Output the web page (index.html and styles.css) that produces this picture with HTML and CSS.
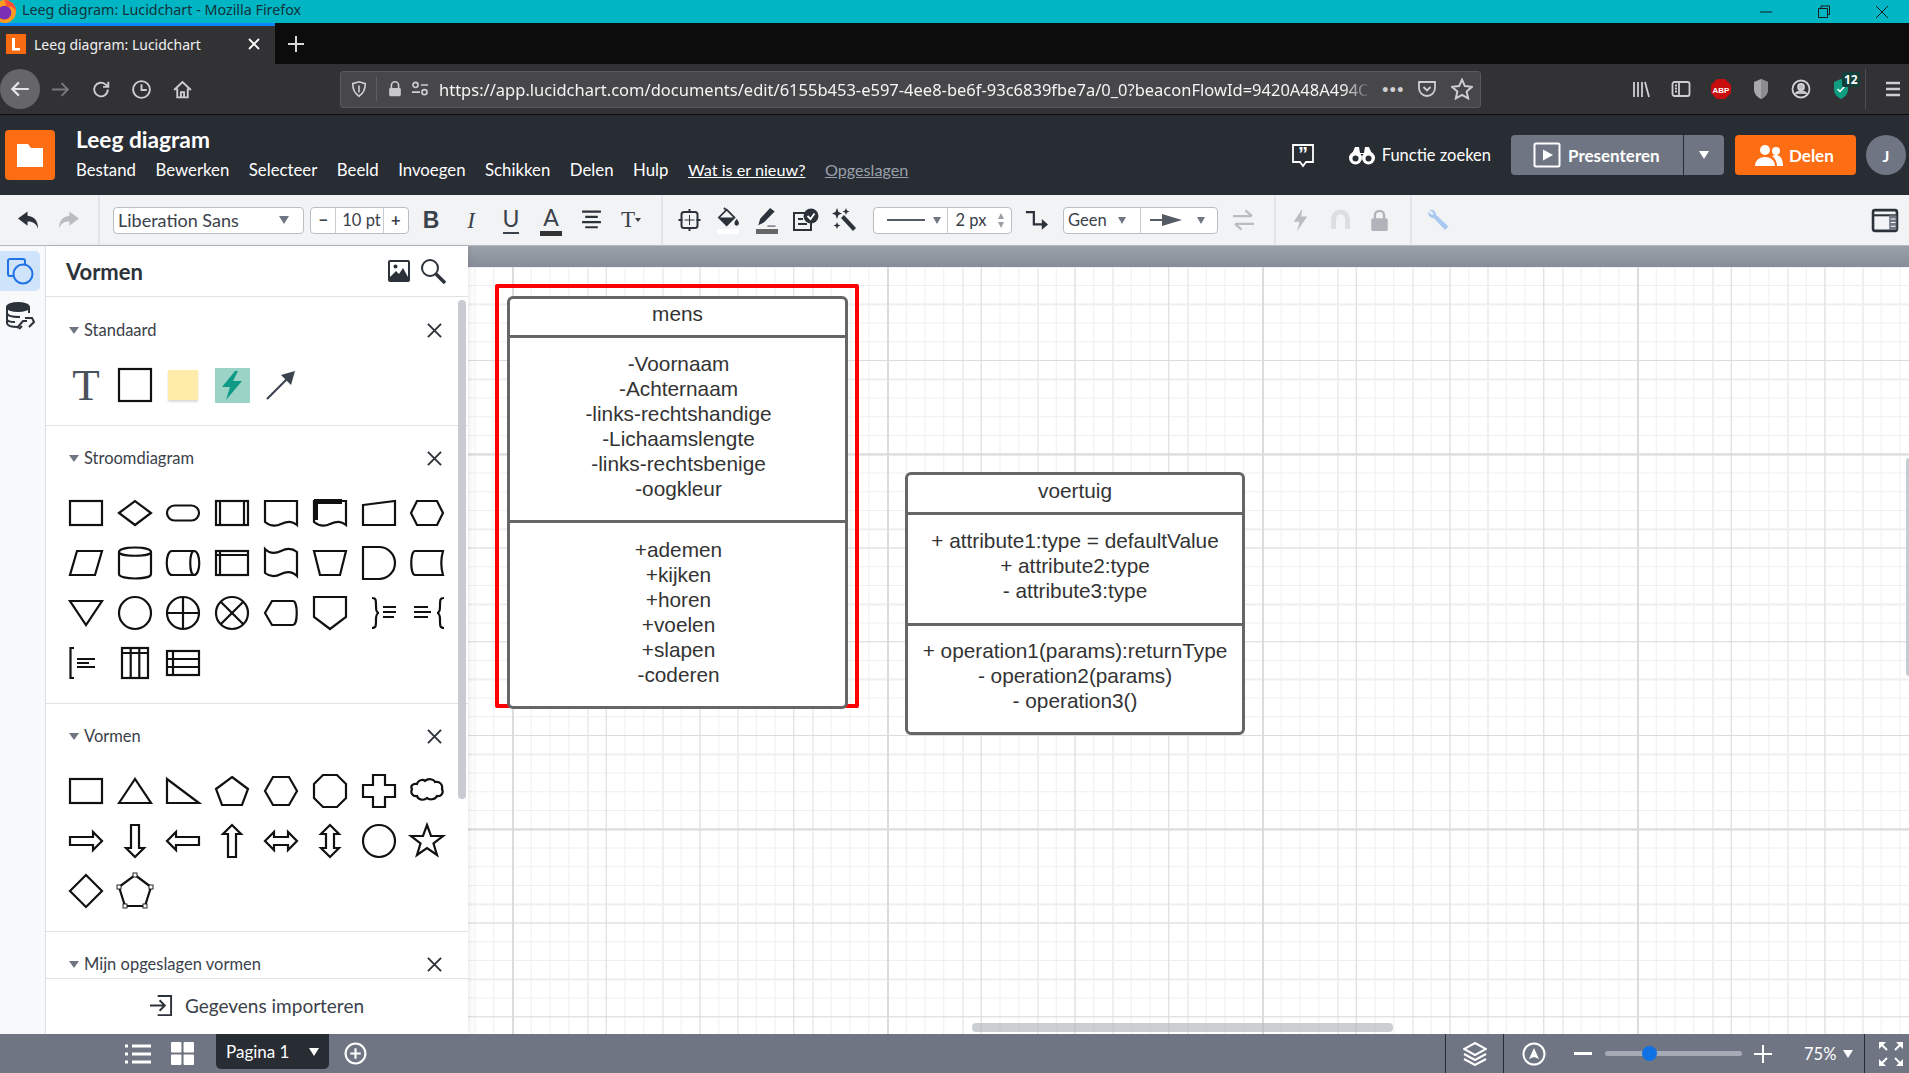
FILE: index.html
```html
<!DOCTYPE html>
<html lang="en">
<head>
  <meta charset="UTF-8">
  <title>Leeg diagram: Lucidchart</title>
  <link rel="stylesheet" href="styles.css">
</head>
<body>
  <div class="titlebar">
    <svg class="ff-logo" viewBox="0 0 20 20"><circle cx="10" cy="10" r="10" fill="#ff9a1f"/><circle cx="10" cy="11" r="6" fill="#7a2fb5"/><path d="M10 0a10 10 0 0 1 10 10c-2-4-5-5-8-4z" fill="#ff4f3a"/></svg>
    <span class="title-text">Leeg diagram: Lucidchart - Mozilla Firefox</span>
    <div class="win-controls">
      <svg viewBox="0 0 14 14"><path d="M1 7H13"/></svg>
      <svg viewBox="0 0 14 14"><path d="M1.5 3.5H10.5V12.5H1.5ZM4 3.5V1H12.5V9.5H10.5"/></svg>
      <svg viewBox="0 0 14 14"><path d="M1 1 13 13M13 1 1 13"/></svg>
    </div>
  </div>

  <div class="tabbar">
    <div class="tab">
      <svg class="favicon" viewBox="0 0 20 20"><rect width="20" height="20" fill="#f96b13"/><path d="M6 4H9V14H14V16.5H6Z" fill="#fff"/></svg>
      <span class="tab-title">Leeg diagram: Lucidchart</span>
      <svg class="tab-close" viewBox="0 0 12 12"><path d="M1 1 11 11M11 1 1 11"/></svg>
    </div>
    <svg class="tab-new" viewBox="0 0 18 18"><path d="M9 1V17M1 9H17"/></svg>
  </div>

  <div class="navbar">
    <div class="nav-back"><svg viewBox="0 0 20 20"><path d="M18 10H3M9 4 3 10l6 6"/></svg></div>
    <button class="nav-btn dim"><svg viewBox="0 0 20 20"><path d="M2 10H17M11 4l6 6-6 6"/></svg></button>
    <button class="nav-btn"><svg viewBox="0 0 20 20"><path d="M16 10a6.5 6.5 0 1 1-2-4.7L16 7M16.5 2.5V7.5H11.5"/></svg></button>
    <button class="nav-btn"><svg viewBox="0 0 20 20"><circle cx="10" cy="10" r="8"/><path d="M10 5V10.5H15"/></svg></button>
    <button class="nav-btn"><svg viewBox="0 0 20 20"><path d="M2 10.5 10 3l8 7.5M5 9V17.5H15V9M8.5 17.5V12.5H11.5V17.5"/></svg></button>
    <div class="urlbar">
      <svg class="url-icon shield" viewBox="0 0 20 20"><path d="M3 4 10 2l7 2c0 7-2 11-7 14C5 15 3 11 3 4ZM10 6V14"/></svg>
      <span class="url-sep"></span>
      <svg class="url-icon lock" viewBox="0 0 20 20"><path d="M6 9V6a4 4 0 0 1 8 0V9" fill="none"/><rect x="3.5" y="9" width="13" height="9" rx="1.5" class="solid"/></svg>
      <svg class="url-icon perm" viewBox="0 0 20 20"><circle cx="5" cy="5.5" r="2.8"/><path d="M11 5.5H19M1 13.5H10"/><circle cx="15" cy="13.5" r="2.8"/></svg>
      <span class="url-text">https://app.lucidchart.com/documents/edit/6155b453-e597-4ee8-be6f-93c6839fbe7a/0_0?beaconFlowId=9420A48A494CD</span>
      <span class="url-more">•••</span>
      <svg class="url-icon pocket" viewBox="0 0 20 20"><path d="M2 3H18V9a8 8 0 0 1-16 0ZM6.5 8 10 11.5 13.5 8"/></svg>
      <svg class="url-icon star" viewBox="0 0 20 20"><path d="M10 1.5 12.6 7.3 19 8 14.2 12.3 15.6 18.5 10 15.3 4.4 18.5 5.8 12.3 1 8 7.4 7.3Z"/></svg>
    </div>
    <div class="nav-right">
      <svg class="ext" viewBox="0 0 20 20"><path d="M3 3V18M7 3V18M11 3V18M14 3 18 18"/></svg>
      <svg class="ext" viewBox="0 0 20 20"><rect x="1.5" y="3" width="17" height="14" rx="2"/><path d="M8 3V17M4 6.5H6M4 9.5H6M4 12.5H6"/></svg>
      <svg class="ext" viewBox="0 0 20 20"><path d="M6 0H14L20 6V14L14 20H6L0 14V6Z" fill="#c70d0d" stroke="none"/><text x="10" y="13.5" class="abp">ABP</text></svg>
      <svg class="ext" viewBox="0 0 20 20"><path d="M10 0 17 3V10C17 15 14 18 10 20 6 18 3 15 3 10V3Z" fill="#a8a8aa" stroke="none"/><path d="M10 0V20C14 18 17 15 17 10V3Z" fill="#8c8c8e" stroke="none"/></svg>
      <svg class="ext" viewBox="0 0 20 20"><circle cx="10" cy="10" r="8.5"/><circle cx="10" cy="8" r="3" fill="#b9b9bb"/><path d="M4.5 15C6 11.5 14 11.5 15.5 15" fill="#b9b9bb"/></svg>
      <div class="ext-badge">
        <svg class="ext" viewBox="0 0 20 20"><path d="M10 0 17 3V10C17 15 14 18 10 20 6 18 3 15 3 10V3Z" fill="#0f9d82" stroke="none"/><path d="M6.5 10 9 12.5 13.5 7.5" stroke="#fff" stroke-width="1.5"/></svg>
        <span class="badge">12</span>
      </div>
      <span class="nav-sep"></span>
      <svg class="ext menu" viewBox="0 0 20 20"><path d="M3 4H17M3 10H17M3 16H17"/></svg>
    </div>
  </div>

  <header class="appbar">
    <div class="logo"><svg viewBox="0 0 26 24"><path d="M0 1H11L14 5H26V24H0Z" fill="#fff"/></svg></div>
    <div class="doc">
      <div class="doc-title">Leeg diagram</div>
      <nav class="menu-row">
        <span>Bestand</span><span>Bewerken</span><span>Selecteer</span><span>Beeld</span><span>Invoegen</span><span>Schikken</span><span>Delen</span><span>Hulp</span>
        <a class="news">Wat is er nieuw?</a><a class="saved">Opgeslagen</a>
      </nav>
    </div>
    <div class="app-actions">
      <svg class="feedback" viewBox="0 0 26 26"><path d="M3 3H23V20H16L13 24 10 20H3Z"/><text x="13" y="19" class="quote">”</text></svg>
      <div class="find">
        <svg viewBox="0 0 26 20"><circle cx="6.5" cy="13" r="6.5" fill="#fff"/><circle cx="19.5" cy="13" r="6.5" fill="#fff"/><path d="M3 9 6 2H10L11 8H15L16 2H20L23 9Z" fill="#fff"/><circle cx="6.5" cy="13.5" r="3" fill="#282c33"/><circle cx="19.5" cy="13.5" r="3" fill="#282c33"/></svg>
        <span>Functie zoeken</span>
      </div>
      <div class="present">
        <div class="present-main">
          <svg viewBox="0 0 28 26"><rect x="1.5" y="1.5" width="25" height="23" rx="1.5"/><path d="M10 7.5 20 13 10 18.5Z" fill="#fff" stroke="none"/></svg>
          <span>Presenteren</span>
        </div>
        <div class="present-more"><i class="caret white"></i></div>
      </div>
      <div class="share">
        <svg viewBox="0 0 28 22"><circle cx="10" cy="6" r="5" fill="#fff"/><circle cx="21" cy="7" r="4" fill="#fff"/><path d="M0 22C0 10 20 10 20 22Z" fill="#fff"/><path d="M17 12C22 9 28 12 28 22H22C22 18 20 14 17 12Z" fill="#fff"/></svg>
        <span>Delen</span>
      </div>
      <div class="avatar">J</div>
    </div>
  </header>

  <div class="toolbar">
    <div class="tb-group tb-undo">
      <button class="tb-btn"><svg viewBox="0 0 24 20"><path d="M11 1 1 8.5 11 16V11.5C16 11.5 20 13 22 19 22 11 18 6 11 5.5Z" fill="#2c323a"/></svg></button>
      <button class="tb-btn"><svg viewBox="0 0 24 20"><path d="M13 1 23 8.5 13 16V11.5C8 11.5 4 13 2 19 2 11 6 6 13 5.5Z" fill="#b9bcc1"/></svg></button>
    </div>
    <span class="tb-sep sep-a"></span>
    <div class="field font-field"><span>Liberation Sans</span><i class="caret"></i></div>
    <div class="field size-field">
      <span class="step">−</span><span class="size-val">10 pt</span><span class="step">+</span>
    </div>
    <div class="tb-group tb-text">
      <button class="tb-btn glyph bold">B</button>
      <button class="tb-btn glyph italic">I</button>
      <button class="tb-btn glyph under">U</button>
      <button class="tb-btn glyph color">A</button>
      <button class="tb-btn"><svg viewBox="0 0 22 20"><path d="M2 2H20M5 7H17M2 12H20M5 17H17" class="stroke"/></svg></button>
      <button class="tb-btn"><span class="glyph-t">T</span><i class="caret tiny"></i></button>
    </div>
    <span class="tb-sep sep-b"></span>
    <div class="tb-group tb-style">
      <button class="tb-btn"><svg viewBox="0 0 22 22"><rect x="3" y="3" width="16" height="16" rx="2.5" class="stroke"/><path d="M11 0V4M11 18V22M0 11H4M18 11H22" class="stroke"/><path d="M11 6V16M6 11H16" class="thin"/></svg></button>
      <button class="tb-btn stack"><svg viewBox="0 0 24 22"><path d="M10 3 18.5 11.5 10 20 1.5 11.5Z" fill="none" stroke="#2c323a" stroke-width="2"/><path d="M1.5 11.5H18.5L10 20Z" fill="#2c323a"/><path d="M7 1 10 4" stroke="#2c323a" stroke-width="2"/><path d="M21 13c1.5 2.5 2.5 3.5 2.5 5a2.5 2.5 0 0 1-5 0c0-1.5 1-2.5 2.5-5Z" fill="#2c323a"/></svg><i class="swatch white-swatch"></i></button>
      <button class="tb-btn stack"><svg viewBox="0 0 22 22"><path d="M15 1 20 5 8 17 2 20 4 13Z" fill="#2c323a"/><path d="M12 21H21" class="thin"/></svg><i class="swatch gray-swatch"></i></button>
      <button class="tb-btn wide"><svg viewBox="0 0 28 24"><path d="M14 5H3V22H20V15" class="stroke"/><path d="M7 11H12M7 16H16" class="stroke"/><circle cx="20" cy="8" r="7.5" fill="#2c323a"/><path d="M16.5 8 19.5 11 23.5 5.5" stroke="#fff" stroke-width="1.8" fill="none"/></svg></button>
      <button class="tb-btn wide"><svg viewBox="0 0 26 26"><path d="M10 11 13 8 25 21 22 24Z" fill="#2c323a"/><path d="M6 1 7.5 5 11 6.5 7.5 8 6 12 4.5 8 1 6.5 4.5 5ZM15 1 16 3.5 18.5 4.5 16 5.5 15 8 14 5.5 11.5 4.5 14 3.5ZM6 15 7 17.5 9.5 18.5 7 19.5 6 22 5 19.5 2.5 18.5 5 17.5Z" fill="#2c323a"/></svg></button>
    </div>
    <div class="field line-field">
      <div class="line-pick"><span class="line-sample"></span><i class="caret"></i></div>
      <div class="line-width"><span>2 px</span><span class="spin"><i class="caret up"></i><i class="caret"></i></span></div>
    </div>
    <button class="tb-btn tb-conn"><svg viewBox="0 0 26 24"><path d="M1 3H10V17H20" fill="none" stroke="#2c323a" stroke-width="2.5"/><path d="M19 11 26 17 19 23Z" fill="#2c323a"/></svg></button>
    <div class="field end-field">
      <div class="end-none"><span>Geen</span><i class="caret"></i></div>
      <div class="end-arrow"><svg viewBox="0 0 32 12"><path d="M0 6H14" stroke="#555b64" stroke-width="2"/><path d="M12 0 32 6 12 12Z" fill="#555b64"/></svg><i class="caret"></i></div>
    </div>
    <button class="tb-btn tb-swap"><svg viewBox="0 0 24 22"><path d="M1 7H20M14 1 21 7M23 15H4M10 21 3 15" stroke="#b9bcc1" stroke-width="2.2" fill="none"/></svg></button>
    <span class="tb-sep sep-c"></span>
    <div class="tb-group tb-off">
      <button class="tb-btn"><svg viewBox="0 0 18 26"><path d="M11 0 1 15H8L5 26 17 9H10Z" fill="#b9bcc1"/></svg></button>
      <button class="tb-btn"><svg viewBox="0 0 20 22"><path d="M3 20V10a7 7 0 0 1 14 0V20" fill="none" stroke="#dcdee2" stroke-width="5"/></svg></button>
      <button class="tb-btn"><svg viewBox="0 0 20 24"><path d="M5 11V7a5 5 0 0 1 10 0V11" fill="none" stroke="#b0b3b9" stroke-width="2.5"/><rect x="1" y="10" width="18" height="14" rx="2" fill="#b0b3b9"/></svg></button>
    </div>
    <span class="tb-sep sep-d"></span>
    <button class="tb-btn tb-wrench"><svg viewBox="0 0 24 24"><path d="M2 1C6 0 9 2 9.5 6.5L23 19 19 23 7 10C3 10 0 7 1 3L5 6.5 7 5Z" fill="#a9c9f0"/></svg></button>
    <button class="tb-btn tb-panel"><svg viewBox="0 0 26 24"><rect x="1.5" y="2" width="23" height="20" rx="2" fill="none" stroke="#2c323a" stroke-width="2.5"/><path d="M2 7H24" stroke="#2c323a" stroke-width="2"/><path d="M17 7V21H24V7Z" fill="#6f7582"/><path d="M18.5 10.5H23M18.5 14H23M18.5 17.5H23" stroke="#fff"/></svg></button>
  </div>

  <div class="workspace">
    <aside class="rail">
      <div class="rail-item active"><svg viewBox="0 0 28 28"><rect x="2" y="2" width="17" height="17" rx="2"/><circle cx="17" cy="17" r="9.5" fill="#cfe3fb"/></svg></div>
      <div class="rail-item"><svg viewBox="0 0 30 28" class="db"><ellipse cx="13" cy="5" rx="11" ry="4" fill="#2c323a"/><path d="M2 5V21C2 24 8 25 13 25M2 11C2 14 8 15 15 15M2 17C2 19 6 20 10 20M24 5V11"/><path d="M17 24 14 27M20 16 27 16 29 20 24 25M12 26 18 19H22"/></svg></div>
    </aside>

    <section class="panel">
      <div class="panel-head">
        <span class="panel-title">Vormen</span>
        <svg class="panel-ico" viewBox="0 0 24 24"><rect x="1" y="1" width="22" height="22" rx="2" fill="#2c323a"/><rect x="3" y="3" width="18" height="15" fill="#fff"/><circle cx="8.5" cy="7.5" r="2" fill="#2c323a"/><path d="M3 18 9 12 12 15 16 9 21 18Z" fill="#2c323a"/></svg>
        <svg class="panel-ico search" viewBox="0 0 26 26"><circle cx="10" cy="10" r="8" fill="none" stroke="#2c323a" stroke-width="2"/><path d="M16 16 25 25" stroke="#2c323a" stroke-width="3.5"/></svg>
      </div>
      <div class="panel-scroll">
        <div class="scrollthumb"></div>

        <div class="lib">
          <div class="lib-head"><i class="caret"></i><span>Standaard</span><svg class="lib-x" viewBox="0 0 16 16"><path d="M1 1 15 15M15 1 1 15"/></svg></div>
          <div class="shapes">
            <div class="cell"><span class="shape-t">T</span></div>
            <div class="cell"><svg class="shape" viewBox="0 0 34 34"><rect x="1" y="1" width="32" height="32"/></svg></div>
            <div class="cell"><span class="sticky"></span></div>
            <div class="cell"><span class="bolt"><svg viewBox="0 0 24 30"><path d="M15 1 2 17H10L6 30 22 11H13L18 1Z" fill="#0d9b85"/></svg></span></div>
            <div class="cell"><svg class="shape" viewBox="0 0 34 34"><path d="M3 31 24 10" stroke="#3a444f" stroke-width="2.2"/><path d="M31 3 27 17 17 7Z" fill="#3a444f" stroke="none"/></svg></div>
          </div>
        </div>

        <div class="lib">
          <div class="lib-head"><i class="caret"></i><span>Stroomdiagram</span><svg class="lib-x" viewBox="0 0 16 16"><path d="M1 1 15 15M15 1 1 15"/></svg></div>
          <div class="shapes">
            <div class="cell"><svg class="shape" viewBox="0 0 34 34"><rect x="1" y="5" width="32" height="24"/></svg></div>
            <div class="cell"><svg class="shape" viewBox="0 0 34 34"><path d="M1 17 17 5 33 17 17 29Z"/></svg></div>
            <div class="cell"><svg class="shape" viewBox="0 0 34 34"><rect x="1" y="9.5" width="32" height="15" rx="7.5"/></svg></div>
            <div class="cell"><svg class="shape" viewBox="0 0 34 34"><rect x="1" y="5" width="32" height="24"/><path d="M5 5V29M29 5V29"/></svg></div>
            <div class="cell"><svg class="shape" viewBox="0 0 34 34"><path d="M1 5H33V29C28 25 24 25 17 28 11 31 6 30 1 26Z"/></svg></div>
            <div class="cell"><svg class="shape" viewBox="0 0 34 34"><path d="M1 5H33V29C28 25 24 25 17 28 11 31 6 30 1 26Z"/><path d="M1 3H29V8H5V24H1Z" fill="#111" stroke="none"/></svg></div>
            <div class="cell"><svg class="shape" viewBox="0 0 34 34"><path d="M1 9 33 5V29H1Z"/></svg></div>
            <div class="cell"><svg class="shape" viewBox="0 0 34 34"><path d="M7 5H27L33 17 27 29H7L1 17Z"/></svg></div>

            <div class="cell"><svg class="shape" viewBox="0 0 34 34"><path d="M8 5H33L26 29H1Z"/></svg></div>
            <div class="cell"><svg class="shape" viewBox="0 0 34 34"><path d="M1 6C1 0 33 0 33 6V28C33 34 1 34 1 28ZM1 6C1 11 33 11 33 6"/></svg></div>
            <div class="cell"><svg class="shape" viewBox="0 0 34 34"><path d="M6 5H28C35 5 35 29 28 29H6C-1 29-1 5 6 5ZM28 5C23 5 23 29 28 29"/></svg></div>
            <div class="cell"><svg class="shape" viewBox="0 0 34 34"><rect x="1" y="5" width="32" height="24"/><path d="M5 5V29M1 9H33"/></svg></div>
            <div class="cell"><svg class="shape" viewBox="0 0 34 34"><path d="M1 3C6 8 11 8 17 5 23 2 28 2 33 6V30C28 25 23 25 17 28 11 31 6 31 1 27Z"/></svg></div>
            <div class="cell"><svg class="shape" viewBox="0 0 34 34"><path d="M1 5H33L27 29H7Z"/></svg></div>
            <div class="cell"><svg class="shape" viewBox="0 0 34 34"><path d="M1 1H17A16 16 0 0 1 17 33H1Z"/></svg></div>
            <div class="cell"><svg class="shape" viewBox="0 0 34 34"><path d="M5 5H33C31 12 31 22 33 29H5C0 29 0 5 5 5Z"/></svg></div>

            <div class="cell"><svg class="shape" viewBox="0 0 34 34"><path d="M1 5H33L17 29Z"/></svg></div>
            <div class="cell"><svg class="shape" viewBox="0 0 34 34"><circle cx="17" cy="17" r="16"/></svg></div>
            <div class="cell"><svg class="shape" viewBox="0 0 34 34"><circle cx="17" cy="17" r="16"/><path d="M17 1V33M1 17H33"/></svg></div>
            <div class="cell"><svg class="shape" viewBox="0 0 34 34"><circle cx="17" cy="17" r="16"/><path d="M5.7 5.7 28.3 28.3M28.3 5.7 5.7 28.3"/></svg></div>
            <div class="cell"><svg class="shape" viewBox="0 0 34 34"><path d="M8 5H29C34 5 34 29 29 29H8L1 17Z"/></svg></div>
            <div class="cell"><svg class="shape" viewBox="0 0 34 34"><path d="M1 1H33V21L17 33 1 21Z"/></svg></div>
            <div class="cell"><svg class="shape" viewBox="0 0 34 34"><path d="M10 2C14 2 14 4 14 10 14 15 15 17 17 17 15 17 14 19 14 24 14 30 14 32 10 32M21 11H34M21 16H34M21 21H32"/></svg></div>
            <div class="cell"><svg class="shape" viewBox="0 0 34 34"><path d="M34 2C30 2 30 4 30 10 30 15 29 17 27 17 29 17 30 19 30 24 30 30 30 32 34 32M4 11H18M4 16H21M4 21H18"/></svg></div>

            <div class="cell"><svg class="shape" viewBox="0 0 34 34"><path d="M5 2H1.5V32H5M8 13H26M8 17H20M8 21H26"/></svg></div>
            <div class="cell"><svg class="shape" viewBox="0 0 34 34"><rect x="4" y="2" width="26" height="30"/><path d="M4 7H30M12.7 2V32M21.3 2V32"/></svg></div>
            <div class="cell"><svg class="shape" viewBox="0 0 34 34"><rect x="1" y="5" width="32" height="24"/><path d="M7 5V29M1 13H33M1 21H33"/></svg></div>
          </div>
        </div>

        <div class="lib">
          <div class="lib-head"><i class="caret"></i><span>Vormen</span><svg class="lib-x" viewBox="0 0 16 16"><path d="M1 1 15 15M15 1 1 15"/></svg></div>
          <div class="shapes">
            <div class="cell"><svg class="shape" viewBox="0 0 34 34"><rect x="1" y="5" width="32" height="24"/></svg></div>
            <div class="cell"><svg class="shape" viewBox="0 0 34 34"><path d="M1 29 17 5 33 29Z"/></svg></div>
            <div class="cell"><svg class="shape" viewBox="0 0 34 34"><path d="M1 5V29H33Z"/></svg></div>
            <div class="cell"><svg class="shape" viewBox="0 0 34 34"><path d="M17 3 33 15 27 31H7L1 15Z"/></svg></div>
            <div class="cell"><svg class="shape" viewBox="0 0 34 34"><path d="M9 3H25L33 17 25 31H9L1 17Z"/></svg></div>
            <div class="cell"><svg class="shape" viewBox="0 0 34 34"><path d="M10 1H24L33 10V24L24 33H10L1 24V10Z"/></svg></div>
            <div class="cell"><svg class="shape" viewBox="0 0 34 34"><path d="M11 1H23V11H33V23H23V33H11V23H1V11H11Z"/></svg></div>
            <div class="cell"><svg class="shape" viewBox="0 0 34 34"><path d="M7 10C8 6 13 5 15 7 18 4 24 5 25 8 30 7 33 11 32 15 34 19 31 23 27 22 25 26 19 26 17 24 14 27 8 26 7 22 3 23 0 19 2 15 0 12 3 9 7 10Z"/></svg></div>

            <div class="cell"><svg class="shape" viewBox="0 0 34 34"><path d="M1 13H24V8L33 17 24 26V21H1Z"/></svg></div>
            <div class="cell"><svg class="shape" viewBox="0 0 34 34"><path d="M13 1H21V24H26L17 33 8 24H13Z"/></svg></div>
            <div class="cell"><svg class="shape" viewBox="0 0 34 34"><path d="M33 13H10V8L1 17 10 26V21H33Z"/></svg></div>
            <div class="cell"><svg class="shape" viewBox="0 0 34 34"><path d="M13 33H21V10H26L17 1 8 10H13Z"/></svg></div>
            <div class="cell"><svg class="shape" viewBox="0 0 34 34"><path d="M1 17 10 8V13H24V8L33 17 24 26V21H10V26Z"/></svg></div>
            <div class="cell"><svg class="shape" viewBox="0 0 34 34"><path d="M17 1 8 10H13V24H8L17 33 26 24H21V10H26Z"/></svg></div>
            <div class="cell"><svg class="shape" viewBox="0 0 34 34"><circle cx="17" cy="17" r="16"/></svg></div>
            <div class="cell"><svg class="shape" viewBox="0 0 34 34"><path d="M17 1 21 12H33L23.5 19.5 27 31 17 24 7 31 10.5 19.5 1 12H13Z"/></svg></div>

            <div class="cell"><svg class="shape" viewBox="0 0 34 34"><path d="M17 1 33 17 17 33 1 17Z"/></svg></div>
            <div class="cell"><svg class="shape" viewBox="0 0 34 34"><path d="M17 1 33 13 27 32H7L1 13Z"/><g class="handles"><rect x="15" y="-1" width="4" height="4"/><rect x="31" y="11" width="4" height="4"/><rect x="25" y="30" width="4" height="4"/><rect x="5" y="30" width="4" height="4"/><rect x="-1" y="11" width="4" height="4"/></g></svg></div>
          </div>
        </div>

        <div class="lib">
          <div class="lib-head"><i class="caret"></i><span>Mijn opgeslagen vormen</span><svg class="lib-x" viewBox="0 0 16 16"><path d="M1 1 15 15M15 1 1 15"/></svg></div>
        </div>
      </div>
      <div class="panel-foot">
        <svg viewBox="0 0 24 24"><path d="M8 2H22V22H8M0 12H15M10 6.5 15.5 12 10 17.5"/></svg>
        <span>Gegevens importeren</span>
      </div>
    </section>

    <main class="stage">
      <div class="stage-band"></div>
      <div class="canvas">
        <div class="selection"></div>
        <div class="uml mens">
          <div class="uml-name">mens</div>
          <div class="uml-body attrs">-Voornaam<br>-Achternaam<br>-links-rechtshandige<br>-Lichaamslengte<br>-links-rechtsbenige<br>-oogkleur</div>
          <div class="uml-body ops">+ademen<br>+kijken<br>+horen<br>+voelen<br>+slapen<br>-coderen</div>
        </div>
        <div class="uml voertuig">
          <div class="uml-name">voertuig</div>
          <div class="uml-body attrs">+ attribute1:type = defaultValue<br>+ attribute2:type<br>- attribute3:type</div>
          <div class="uml-body ops">+ operation1(params):returnType<br>- operation2(params)<br>- operation3()</div>
        </div>
        <div class="hscroll"></div>
        <div class="vscroll"></div>
      </div>
    </main>
  </div>

  <footer class="statusbar">
    <div class="pages">
      <svg class="st-ico list" viewBox="0 0 26 22"><path d="M0 3H3M7 3H26M0 11H3M7 11H26M0 19H3M7 19H26"/></svg>
      <svg class="st-ico grid4" viewBox="0 0 22 22"><rect width="10" height="10" rx="1"/><rect x="12" width="10" height="10" rx="1"/><rect y="12" width="10" height="10" rx="1"/><rect x="12" y="12" width="10" height="10" rx="1"/></svg>
      <div class="page-tab"><span>Pagina 1</span><i class="caret white"></i></div>
      <svg class="st-ico add" viewBox="0 0 22 22"><circle cx="11" cy="11" r="9.5"/><path d="M11 6V16M6 11H16"/></svg>
    </div>
    <div class="status-right">
      <div class="st-cell layers"><svg viewBox="0 0 24 24"><path d="M12 1 23 7 12 13 1 7ZM1 12 12 18 23 12M1 17 12 23 23 17"/></svg></div>
      <div class="zoom-wrap">
        <svg class="st-ico nav-dial" viewBox="0 0 24 24"><circle cx="12" cy="12" r="10.5"/><path d="M12 6 17 17 12 15 7 17Z" fill="#fff" stroke="none"/></svg>
        <span class="zoom-minus"></span>
        <div class="slider"><span class="thumb"></span></div>
        <svg class="st-ico zoom-plus" viewBox="0 0 18 18"><path d="M9 0V18M0 9H18"/></svg>
        <span class="zoom-val">75%</span><i class="caret white"></i>
      </div>
      <div class="st-cell full"><svg viewBox="0 0 24 24"><path d="M0 0H7L0 7ZM24 0H17L24 7ZM0 24H7L0 17ZM24 24H17L24 17Z" fill="#fff"/><path d="M3 3 8 8M21 3 16 8M3 21 8 16M21 21 16 16" stroke="#fff" stroke-width="2"/></svg></div>
    </div>
  </footer>
</body>
</html>
```

FILE: styles.css
```css
:root {
  --ui-font: 'Lato', 'Noto Sans', sans-serif;
  --ff-font: 'Noto Sans', sans-serif;
  --dark: #282c33;
  --slate: #6f7582;
  --orange: #fd6d14;
  --ink: #2c323a;
  --rule: #e0e2e6;
}

* {
  box-sizing: border-box;
}

html, body {
  height: 100%;
}

body {
  margin: 0;
  display: flex;
  flex-direction: column;
  overflow: hidden;
  background: #fff;
  font-family: var(--ui-font);
  color: var(--ink);
}

svg {
  display: block;
}

button {
  border: none;
  background: none;
  padding: 0;
  font: inherit;
  color: inherit;
}

.caret {
  display: inline-block;
  width: 0;
  height: 0;
  border-left: 5.5px solid transparent;
  border-right: 5.5px solid transparent;
  border-top: 8px solid #6f7582;
}

.caret.white {
  border-top-color: #fff;
}

/* window title */
.titlebar {
  height: 23px;
  flex: none;
  display: flex;
  align-items: center;
  overflow: hidden;
  background: #00b6c4;
  color: #10323a;
  font-family: var(--ff-font);
  font-size: 14.3px;
}

.ff-logo {
  width: 23px;
  height: 23px;
  margin-left: -7px;
}

.title-text {
  margin-left: 6px;
  padding-bottom: 5px;
}

.win-controls {
  margin-left: auto;
  display: flex;
  gap: 44px;
  margin-right: 20px;
}

.win-controls svg {
  width: 14px;
  height: 14px;
  fill: none;
  stroke: #1a1a1a;
  stroke-width: 1;
}

/* tabs */
.tabbar {
  height: 41px;
  flex: none;
  display: flex;
  align-items: center;
  background: #0c0c0d;
}

.tab {
  width: 275px;
  height: 41px;
  display: flex;
  align-items: center;
  padding-bottom: 2px;
  border-top: 3px solid #0a84ff;
  background: #323234;
  color: #f0f0f2;
  font-family: var(--ff-font);
  font-size: 14px;
}

.favicon {
  width: 20px;
  height: 20px;
  margin-left: 6px;
}

.tab-title {
  margin-left: 8px;
}

.tab-close {
  width: 12px;
  height: 12px;
  margin-left: auto;
  margin-right: 15px;
  fill: none;
  stroke: #fff;
  stroke-width: 1.8;
}

.tab-new {
  width: 18px;
  height: 18px;
  margin-left: 12px;
  fill: none;
  stroke: #d8d8da;
  stroke-width: 2;
}

/* firefox nav row */
.navbar {
  height: 51px;
  flex: none;
  display: flex;
  align-items: center;
  background: #323234;
  border-bottom: 1px solid #0c0c0d;
}

.navbar svg {
  fill: none;
  stroke: #cfcfd1;
  stroke-width: 1.8;
}

.nav-back {
  width: 40px;
  height: 40px;
  border-radius: 50%;
  display: flex;
  align-items: center;
  justify-content: center;
  background: #666668;
}

.nav-back svg {
  width: 22px;
  height: 22px;
  stroke: #e4e4e6;
  stroke-width: 2;
}

.nav-btn {
  width: 40px;
  height: 40px;
  display: flex;
  align-items: center;
  justify-content: center;
  margin-left: 0.5px;
}

.nav-btn svg {
  width: 21px;
  height: 21px;
}

.nav-btn.dim svg {
  stroke: #7a7a7c;
}

.urlbar {
  width: 1141px;
  height: 37px;
  margin-left: 138px;
  flex: none;
  display: flex;
  align-items: center;
  background: #474749;
  border: 1px solid #5a5a5c;
  border-radius: 3px;
  position: relative;
}

.url-icon {
  flex: none;
}

.url-icon.shield {
  width: 18px;
  height: 18px;
  margin-left: 9px;
}

.url-sep {
  width: 1px;
  height: 24px;
  margin-left: 8px;
  background: #5e5e60;
}

.url-icon.lock {
  width: 18px;
  height: 18px;
  margin-left: 9px;
}

.url-icon.lock .solid {
  fill: #c8c8ca;
  stroke: none;
}

.url-icon.perm {
  width: 18px;
  height: 18px;
  margin-left: 7px;
}

.url-text {
  margin-left: 10px;
  flex: none;
  white-space: nowrap;
  color: #f4f4f5;
  font-family: var(--ff-font);
  font-size: 16.5px;
  -webkit-mask-image: linear-gradient(to right, #000 905px, transparent 932px);
  mask-image: linear-gradient(to right, #000 905px, transparent 932px);
}

.url-more {
  margin-left: auto;
  color: #cfcfd1;
  font-size: 13px;
}

.url-icon.pocket {
  width: 20px;
  height: 20px;
  margin-left: 13px;
}

.url-icon.star {
  width: 22px;
  height: 22px;
  margin-left: 14px;
  margin-right: 7px;
}

.nav-right {
  flex: 1;
  display: flex;
  align-items: center;
  margin-left: 150px;
}

.nav-right .ext {
  width: 20px;
  height: 20px;
  flex: none;
}

.nav-right > .ext,
.ext-badge {
  margin-right: 20px;
}

.abp {
  fill: #fff;
  stroke: none;
  font-family: 'Liberation Sans', sans-serif;
  font-size: 8px;
  font-weight: bold;
  text-anchor: middle;
}

.ext-badge {
  position: relative;
  margin-right: 0;
}

.badge {
  position: absolute;
  left: 11px;
  top: -7px;
  padding: 0 2px;
  background: #123f3a;
  border-radius: 2px;
  color: #fff;
  font-family: var(--ff-font);
  font-size: 12px;
  font-weight: 700;
  line-height: 15px;
}

.nav-sep {
  width: 1px;
  height: 40px;
  margin-left: 14px;
  background: #4e4e50;
}

.nav-right > .menu {
  margin-left: 17px;
  margin-right: 0;
  stroke-width: 2.5;
}

/* lucid header */
.appbar {
  height: 80px;
  flex: none;
  display: flex;
  align-items: center;
  background: var(--dark);
  color: #fff;
}

.logo {
  width: 50px;
  height: 50px;
  margin-left: 5px;
  flex: none;
  display: flex;
  align-items: center;
  justify-content: center;
  border-radius: 4px;
  background: var(--orange);
}

.logo svg {
  width: 26px;
  height: 24px;
}

.doc {
  margin-left: 21px;
  padding-bottom: 2px;
}

.doc-title {
  font-size: 22.7px;
  font-weight: 700;
  line-height: 30px;
}

.menu-row {
  display: flex;
  gap: 19.5px;
  font-size: 16.8px;
  line-height: 26px;
  margin-top: 2px;
}

.menu-row a {
  font-size: 16.2px;
  text-decoration: underline;
}

.menu-row .saved {
  color: #9aa0ab;
}

.app-actions {
  margin-left: auto;
  display: flex;
  align-items: center;
  padding-right: 3px;
}

.feedback {
  width: 26px;
  height: 26px;
  fill: none;
  stroke: #fff;
  stroke-width: 1.8;
}

.quote {
  fill: #fff;
  stroke: none;
  font-family: 'Liberation Sans', sans-serif;
  font-size: 20px;
  font-weight: bold;
  text-anchor: middle;
}

.find {
  display: flex;
  align-items: center;
  margin-left: 33px;
  font-size: 16.5px;
}

.find svg {
  width: 26px;
  height: 20px;
  margin-right: 7px;
}

.present {
  display: flex;
  height: 40px;
  margin-left: 20px;
  border-radius: 4px;
  overflow: hidden;
  background: var(--slate);
}

.present-main {
  width: 173px;
  display: flex;
  align-items: center;
  padding-left: 22px;
  font-size: 17px;
  font-weight: 700;
  border-right: 1px solid #282c33;
}

.present-main svg {
  width: 28px;
  height: 26px;
  margin-right: 7px;
  fill: none;
  stroke: #fff;
  stroke-width: 2;
}

.present-more {
  width: 40px;
  display: flex;
  align-items: center;
  justify-content: center;
}

.share {
  width: 121px;
  height: 40px;
  margin-left: 11px;
  display: flex;
  align-items: center;
  padding-left: 20px;
  border-radius: 4px;
  background: var(--orange);
  font-size: 17px;
  font-weight: 700;
}

.share svg {
  width: 28px;
  height: 22px;
  margin-right: 6px;
}

.avatar {
  width: 40px;
  height: 40px;
  margin-left: 10px;
  display: flex;
  align-items: center;
  justify-content: center;
  border-radius: 50%;
  background: var(--slate);
  font-size: 16px;
  font-weight: 700;
}

/* format toolbar */
.toolbar {
  height: 51px;
  flex: none;
  display: flex;
  align-items: center;
  background: #f2f3f5;
  border-bottom: 1px solid #b4b8bf;
}

.tb-group {
  display: flex;
  align-items: center;
  flex: none;
}

.tb-btn {
  width: 39.5px;
  height: 34px;
  flex: none;
  display: flex;
  align-items: center;
  justify-content: center;
  position: relative;
}

.tb-text .tb-btn {
  width: 40px;
}

.tb-style .tb-btn {
  width: 38.5px;
}

.tb-btn svg {
  width: 23px;
  height: 22px;
}

.tb-btn.wide svg {
  width: 28px;
  height: 26px;
}

.tb-btn .stroke {
  fill: none;
  stroke: var(--ink);
  stroke-width: 2;
}

.tb-btn .thin {
  fill: none;
  stroke: var(--ink);
  stroke-width: 1;
}

.tb-sep {
  width: 2px;
  height: 50px;
  flex: none;
  background: #e2e4e8;
}

.sep-a { margin-left: 10px; }
.sep-b { margin-left: 10px; }
.sep-c { margin-left: 11px; }
.sep-d { margin-left: 10px; }

.tb-undo { margin-left: 9px; }
.tb-text { margin-left: 2px; }
.tb-style { margin-left: 7.5px; }
.tb-off { margin-left: 5px; }

.field {
  height: 27px;
  flex: none;
  display: flex;
  align-items: center;
  background: #fff;
  border: 1px solid #b9bdc4;
  border-radius: 4px;
  color: #3a414a;
  font-size: 16.5px;
}

.font-field {
  width: 191px;
  margin-left: 13px;
  padding: 0 14px 0 4px;
  justify-content: space-between;
  font-size: 18px;
}

.size-field {
  width: 99px;
  margin-left: 6px;
}

.step {
  width: 25px;
  text-align: center;
  font-weight: 700;
}

.size-val {
  width: 49px;
  height: 100%;
  display: flex;
  align-items: center;
  justify-content: center;
  padding-left: 4px;
  border-left: 1px solid #c9ccd2;
  border-right: 1px solid #c9ccd2;
}

.glyph {
  font-size: 23px;
  line-height: 1;
  color: #3a414a;
}

.glyph.bold {
  font-family: 'Liberation Sans', sans-serif;
  font-weight: 700;
}

.glyph.italic {
  font-family: 'Liberation Serif', serif;
  font-style: italic;
}

.glyph.under {
  font-family: 'Lato', sans-serif;
  padding-bottom: 3px;
}

.glyph.under::after {
  content: '';
  position: absolute;
  left: 12px;
  right: 12px;
  bottom: 3px;
  height: 2px;
  background: #3a414a;
}

.glyph.color {
  font-family: 'Lato', sans-serif;
  padding-bottom: 6px;
}

.glyph.color::after {
  content: '';
  position: absolute;
  left: 9px;
  right: 9px;
  bottom: 1px;
  height: 5px;
  background: #333;
}

.glyph-t {
  font-family: 'Liberation Serif', serif;
  font-size: 23px;
  color: #3a414a;
}

.caret.tiny {
  border-left-width: 3px;
  border-right-width: 3px;
  border-top-width: 4px;
  border-top-color: #3a414a;
}

.stack {
  flex-direction: column;
}

.stack svg {
  height: 20px;
}

.swatch {
  width: 22px;
  height: 5px;
  margin-top: 2px;
}

.white-swatch { background: #fff; }
.gray-swatch { background: #666; }

.line-field {
  width: 139px;
  margin-left: 9.5px;
}

.line-pick {
  width: 74px;
  height: 100%;
  display: flex;
  align-items: center;
  gap: 8px;
  padding-left: 13px;
  border-right: 1px solid #c9ccd2;
}

.line-sample {
  width: 38px;
  height: 2px;
  background: #555b64;
}

.line-pick .caret,
.end-none .caret,
.end-arrow .caret {
  border-left-width: 4.5px;
  border-right-width: 4.5px;
  border-top-width: 7px;
}

.line-width {
  flex: 1;
  display: flex;
  align-items: center;
  justify-content: space-between;
  padding: 0 7px 0 8px;
}

.spin {
  display: flex;
  flex-direction: column;
  gap: 3px;
}

.spin .caret {
  border-left-width: 3.5px;
  border-right-width: 3.5px;
  border-top-width: 6px;
  border-top-color: #9a9fa8;
}

.spin .caret.up {
  transform: rotate(180deg);
}

.tb-conn { margin-left: 5.5px; }

.end-field {
  width: 155px;
  margin-left: 6.5px;
}

.end-none {
  width: 77px;
  height: 100%;
  display: flex;
  align-items: center;
  justify-content: space-between;
  padding: 0 14px 0 4px;
  border-right: 1px solid #c9ccd2;
}

.end-arrow {
  flex: 1;
  display: flex;
  align-items: center;
  justify-content: space-between;
  padding: 0 12px 0 9px;
}

.end-arrow svg {
  width: 32px;
  height: 12px;
}

.tb-swap { margin-left: 5.5px; }
.tb-wrench { margin-left: 7px; }

.tb-panel {
  margin-left: auto;
  margin-right: 4px;
}

.tb-panel svg {
  width: 28px;
  height: 25px;
}

/* main area */
.workspace {
  flex: 1;
  min-height: 0;
  display: flex;
}

.rail {
  width: 46px;
  flex: none;
  padding-top: 5px;
  background: #f8f9fb;
  border-right: 1px solid var(--rule);
}

.rail-item {
  width: 40px;
  height: 40px;
  margin-bottom: 5px;
  display: flex;
  align-items: center;
  justify-content: center;
  border-radius: 0 5px 5px 0;
}

.rail-item svg {
  width: 28px;
  height: 28px;
  fill: none;
  stroke: #1f72e8;
  stroke-width: 2;
}

.rail-item.active {
  background: #cfe3fb;
}

.rail-item svg.db {
  width: 30px;
  stroke: var(--ink);
}

.panel {
  width: 422px;
  flex: none;
  display: flex;
  flex-direction: column;
  background: #fff;
  box-shadow: 2px 0 5px rgba(0, 0, 0, 0.08);
  position: relative;
  z-index: 1;
}

.panel-head {
  height: 51px;
  flex: none;
  display: flex;
  align-items: center;
  padding-left: 20px;
  border-bottom: 1px solid var(--rule);
}

.panel-title {
  font-size: 22px;
  font-weight: 700;
  margin-right: auto;
}

.panel-ico {
  width: 24px;
  height: 24px;
  margin-right: 9px;
}

.panel-ico.search {
  width: 26px;
  height: 26px;
  margin-right: 22px;
}

.panel-scroll {
  flex: 1;
  min-height: 0;
  overflow: hidden;
  position: relative;
}

.scrollthumb {
  position: absolute;
  top: 3px;
  right: 2px;
  width: 8px;
  height: 499px;
  border-radius: 4px;
  background: #c8ccd2;
}

.lib {
  padding: 21px 0 15px;
  border-bottom: 1px solid var(--rule);
}

.scrollthumb + .lib {
  padding-top: 22px;
}

.lib-head {
  height: 22px;
  display: flex;
  align-items: center;
  padding-left: 23px;
  color: #3a414a;
  font-size: 16.5px;
}

.lib-head span {
  margin-left: 5px;
}

.lib-x {
  width: 15px;
  height: 15px;
  margin-left: auto;
  margin-right: 26px;
  fill: none;
  stroke: var(--ink);
  stroke-width: 2;
}

.lib-head .caret {
  border-left-width: 5px;
  border-right-width: 5px;
  border-top-width: 7px;
}

.shapes {
  display: grid;
  grid-template-columns: repeat(8, 48.8px);
  grid-auto-rows: 50px;
  margin-top: 19px;
  padding-left: 15.5px;
}

.cell {
  display: flex;
  align-items: center;
  justify-content: center;
}

.shape {
  width: 34px;
  height: 34px;
  overflow: visible;
  fill: #fff;
  stroke: #111;
  stroke-width: 2.2;
}

.handles rect {
  stroke-width: 0.9;
  fill: #fff;
}

.shape-t {
  font-family: 'Liberation Serif', serif;
  font-size: 45px;
  line-height: 1;
  color: #49525c;
}

.sticky {
  width: 30px;
  height: 30px;
  background: #ffeca9;
  box-shadow: 0 2px 2px rgba(0, 0, 0, 0.15);
}

.bolt {
  width: 35px;
  height: 35px;
  display: flex;
  align-items: center;
  justify-content: center;
  background: #9bd4c7;
}

.bolt svg {
  width: 24px;
  height: 30px;
}

.panel-foot {
  height: 56px;
  flex: none;
  display: flex;
  align-items: center;
  justify-content: center;
  gap: 12px;
  border-top: 1px solid var(--rule);
  background: #fff;
  color: #3a414a;
  font-size: 19px;
  padding-bottom: 2px;
}

.panel-foot svg {
  width: 23px;
  height: 23px;
  fill: none;
  stroke: var(--ink);
  stroke-width: 2;
}

.stage {
  flex: 1;
  min-width: 0;
  display: flex;
  flex-direction: column;
}

.stage-band {
  height: 21px;
  flex: none;
  background: linear-gradient(#9ba1aa, #878d96);
}

.canvas {
  flex: 1;
  position: relative;
  overflow: hidden;
  background-color: #fff;
  background-image:
    linear-gradient(to right, #dcdcdc 2px, transparent 2px),
    linear-gradient(to bottom, #dcdcdc 2px, transparent 2px),
    linear-gradient(to right, #dcdcdc 1px, transparent 1px),
    linear-gradient(to bottom, #dcdcdc 1px, transparent 1px),
    linear-gradient(to right, #efefef 2px, transparent 2px),
    linear-gradient(to bottom, #efefef 2px, transparent 2px),
    linear-gradient(to right, #efefef 1px, transparent 1px),
    linear-gradient(to bottom, #efefef 1px, transparent 1px);
  background-size:
    375px 100%, 100% 375px,
    93.75px 100%, 100% 93.75px,
    75px 100%, 100% 75px,
    18.75px 100%, 100% 18.75px;
  background-position:
    44px 0, 0 186.5px,
    44px 0, 0 93px,
    44px 0, 0 36.5px,
    6.5px 0, 0 18px;
}

.selection {
  position: absolute;
  left: 27px;
  top: 17px;
  width: 364px;
  height: 424px;
  border: 4px solid #ff0000;
  border-radius: 2px;
}

/* uml classes sit at their place on the canvas */
.uml {
  position: absolute;
  display: flex;
  flex-direction: column;
  background: #fff;
  border: 3px solid #666;
  border-radius: 6px;
  color: #333;
  font-family: 'Liberation Sans', sans-serif;
  font-size: 20.8px;
  line-height: 25px;
  text-align: center;
}

.uml-name {
  height: 39px;
  flex: none;
  line-height: 30px;
  border-bottom: 3px solid #666;
}

.uml-body {
  flex: none;
}

.attrs {
  border-bottom: 3px solid #666;
}

.mens {
  left: 39px;
  top: 29px;
  width: 341px;
  height: 413px;
}

.mens .attrs {
  height: 185px;
  padding: 13px 0 0 2px;
}

.mens .ops {
  padding: 14px 0 0 2px;
}

.voertuig {
  left: 437px;
  top: 205px;
  width: 340px;
  height: 263px;
}

.voertuig .uml-name {
  height: 40px;
  line-height: 32px;
}

.voertuig .attrs {
  height: 111px;
  padding-top: 13px;
}

.voertuig .ops {
  padding-top: 12px;
}

.hscroll {
  position: absolute;
  left: 504px;
  bottom: 2px;
  width: 421px;
  height: 9px;
  border-radius: 4px;
  background: rgba(175, 180, 188, 0.65);
}

.vscroll {
  position: absolute;
  right: 0;
  top: 191px;
  width: 3px;
  height: 218px;
  border-radius: 3px 0 0 3px;
  background: #c8ccd2;
}

/* bottom bar */
.statusbar {
  height: 39px;
  flex: none;
  display: flex;
  align-items: stretch;
  background: var(--slate);
  color: #fff;
}

.pages {
  display: flex;
  align-items: center;
  padding-left: 125px;
}

.st-ico {
  flex: none;
  fill: none;
  stroke: #fff;
  stroke-width: 2;
}

.st-ico.list {
  width: 26px;
  height: 22px;
  stroke-width: 3;
}

.st-ico.grid4 {
  width: 23px;
  height: 23px;
  margin-left: 20px;
  fill: #fff;
  stroke: none;
}

.page-tab {
  width: 113px;
  height: 35px;
  margin-left: 22px;
  align-self: flex-start;
  display: flex;
  align-items: center;
  justify-content: space-between;
  padding: 0 10px;
  border-radius: 0 0 5px 5px;
  background: var(--dark);
  font-size: 17px;
}

.st-ico.add {
  width: 23px;
  height: 23px;
  margin-left: 15px;
}

.status-right {
  margin-left: auto;
  display: flex;
  align-items: stretch;
}

.st-cell {
  display: flex;
  align-items: center;
  justify-content: center;
}

.st-cell.layers {
  width: 59px;
  border-left: 1px solid var(--dark);
  border-right: 1px solid var(--dark);
}

.st-cell.layers svg {
  width: 24px;
  height: 24px;
  fill: none;
  stroke: #fff;
  stroke-width: 2;
}

.zoom-wrap {
  width: 360px;
  display: flex;
  align-items: center;
  padding-left: 18px;
}

.st-ico.nav-dial {
  width: 24px;
  height: 24px;
}

.zoom-minus {
  width: 18px;
  height: 3px;
  margin-left: 28px;
  background: #fff;
}

.slider {
  width: 137px;
  height: 5px;
  margin-left: 13px;
  border-radius: 3px;
  background: #a5aab5;
  position: relative;
}

.thumb {
  position: absolute;
  left: 37px;
  top: -5px;
  width: 15px;
  height: 15px;
  border-radius: 50%;
  background: #1071e5;
}

.st-ico.zoom-plus {
  width: 18px;
  height: 18px;
  margin-left: 12px;
}

.zoom-val {
  margin-left: 32px;
  font-size: 16.5px;
}

.zoom-wrap .caret {
  margin-left: 7px;
}

.st-cell.full {
  width: 45px;
  padding-left: 8px;
  border-left: 1px solid var(--dark);
}

.st-cell.full svg {
  width: 24px;
  height: 24px;
}
```
